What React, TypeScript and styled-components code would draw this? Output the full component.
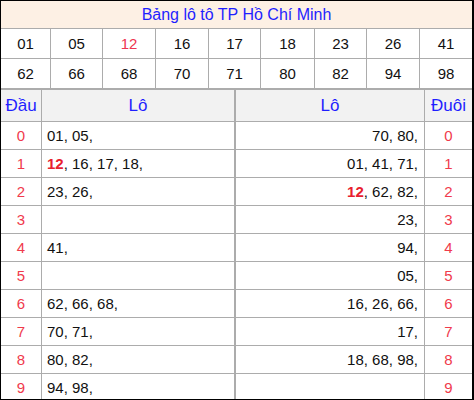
import styled, { createGlobalStyle } from "styled-components";

const GlobalStyle = createGlobalStyle`
body {
    margin: 0;
    font-family: "Liberation Sans", Arial, sans-serif;
    background: #fff;
}
`;

const numbers = [
    "01", "05", "12", "16", "17", "18", "23", "26", "41",
    "62", "66", "68", "70", "71", "80", "82", "94", "98",
];

const special = ["12"];

const dau: string[][] = [
    ["01", "05"],
    ["12", "16", "17", "18"],
    ["23", "26"],
    [],
    ["41"],
    [],
    ["62", "66", "68"],
    ["70", "71"],
    ["80", "82"],
    ["94", "98"],
];

const duoi: string[][] = [
    ["70", "80"],
    ["01", "41", "71"],
    ["12", "62", "82"],
    ["23"],
    ["94"],
    ["05"],
    ["16", "26", "66"],
    ["17"],
    ["18", "68", "98"],
    [],
];

function LoList({ items }: { items: string[] }) {
    return (
        <>
            {items.map((n, i) => (
                <span key={i}>
                    {special.includes(n) ? <Hot>{n}</Hot> : n}
                    {i < items.length - 1 ? ", " : ","}
                </span>
            ))}
        </>
    );
}

export default function App() {
    return (
        <>
            <GlobalStyle />
            <Board>
                <Title>Bảng lô tô TP Hồ Chí Minh</Title>
                <NumberGrid>
                    {numbers.map((n, i) => (
                        <NumCell key={i} $last={i % 9 === 8} $bottom={i >= 9} $red={special.includes(n)}>
                            {n}
                        </NumCell>
                    ))}
                </NumberGrid>
                <LoTable>
                    <HeadCell>Đầu</HeadCell>
                    <HeadCell $thick>Lô</HeadCell>
                    <HeadCell>Lô</HeadCell>
                    <HeadCell $last>Đuôi</HeadCell>
                    {dau.map((row, d) => (
                        <Row key={d}>
                            <DigitCell>{d}</DigitCell>
                            <ListCell $thick>
                                <LoList items={row} />
                            </ListCell>
                            <ListCell $right>
                                <LoList items={duoi[d]} />
                            </ListCell>
                            <DigitCell $last>{d}</DigitCell>
                        </Row>
                    ))}
                </LoTable>
            </Board>
        </>
    );
}

const Board = styled.div`
box-sizing: border-box;
width: 474px;
height: 400px;
border: 1px solid #000;
border-right-width: 2px;
overflow: hidden;
`;

const Title = styled.div`
height: 27px;
background: #fdf0e4;
border-bottom: 1px solid #acacac;
color: #1f1fff;
font-size: 16px;
display: flex;
align-items: center;
justify-content: center;
`;

const NumberGrid = styled.div`
display: grid;
grid-template-columns: 50px 52px 53px 53px 52px 54px 52px 53px 1fr;
border-bottom: 2px solid #acacac;
`;

const NumCell = styled.div<{ $last?: boolean; $bottom?: boolean; $red?: boolean }>`
height: 29px;
display: flex;
align-items: center;
justify-content: center;
font-size: 15px;
color: ${(p) => (p.$red ? "#ee3550" : "#111")};
border-right: ${(p) => (p.$last ? "none" : "1px solid #acacac")};
border-bottom: ${(p) => (p.$bottom ? "none" : "1px solid #acacac")};
`;

const LoTable = styled.div`
display: grid;
grid-template-columns: 41px 194px 189px 1fr;
`;

const Row = styled.div`
display: contents;
`;

const HeadCell = styled.div<{ $thick?: boolean; $last?: boolean }>`
box-sizing: border-box;
height: 32px;
background: #f2f2f2;
color: #1f1fff;
font-size: 17px;
display: flex;
align-items: center;
justify-content: center;
border-bottom: 1px solid #acacac;
border-right: ${(p) => (p.$last ? "none" : p.$thick ? "2px solid #acacac" : "1px solid #acacac")};
`;

const DigitCell = styled.div<{ $last?: boolean }>`
box-sizing: border-box;
height: 28px;
display: flex;
align-items: center;
justify-content: center;
color: #f03a4c;
font-size: 15px;
border-bottom: 1px solid #acacac;
border-right: ${(p) => (p.$last ? "none" : "1px solid #acacac")};
`;

const ListCell = styled.div<{ $thick?: boolean; $right?: boolean }>`
box-sizing: border-box;
height: 28px;
display: flex;
align-items: center;
justify-content: ${(p) => (p.$right ? "flex-end" : "flex-start")};
padding: ${(p) => (p.$right ? "0 6px 0 0" : "0 0 0 5px")};
white-space: pre;
color: #111;
font-size: 15px;
border-bottom: 1px solid #acacac;
border-right: ${(p) => (p.$thick ? "2px solid #acacac" : "1px solid #acacac")};
`;

const Hot = styled.b`
color: #e8202e;
font-size: 15px;
`;
